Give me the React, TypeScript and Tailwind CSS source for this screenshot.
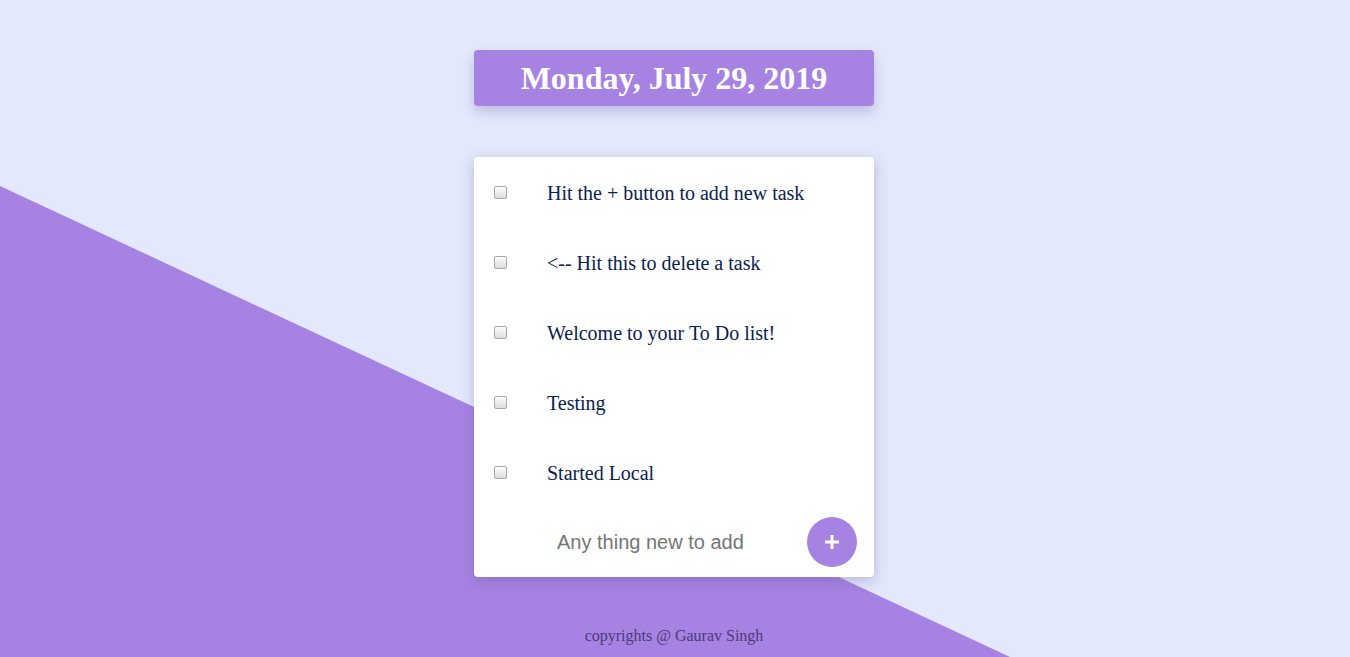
import { useState } from 'react';

const initialTasks = [
	'Hit the + button to add new task',
	'<-- Hit this to delete a task',
	'Welcome to your To Do list!',
	'Testing',
	'Started Local',
];

export default function App() {
	const [tasks, setTasks] = useState(initialTasks);
	const [draft, setDraft] = useState('');

	const addTask = () => {
		if (!draft.trim()) return;
		setTasks(list => [...list, draft.trim()]);
		setDraft('');
	};

	return (
		<div className="relative h-[657px] overflow-hidden bg-[#e3e8fc] font-['Liberation_Serif',serif]">
			{/* diagonal purple backdrop */}
			<div className="absolute inset-0 bg-[#a682e2] [clip-path:polygon(0_186px,1010px_657px,0_657px)]" />

			<div className="relative flex flex-col items-center pr-[2px] pt-[50px]">
				<div className="flex h-[56px] w-[400px] items-center justify-center rounded bg-[#a682e2] shadow-[0_6px_12px_rgba(120,110,180,0.35)]">
					<h1 className="text-[32px] font-bold leading-none text-white">Monday, July 29, 2019</h1>
				</div>

				<div className="mt-[51px] w-[400px] rounded bg-white shadow-[0_4px_14px_rgba(100,90,150,0.35)]">
					{tasks.map((task, i) => (
						<div key={i} className="flex h-[70px] items-center">
							<input
								type="checkbox"
								onChange={() => setTasks(list => list.filter((_, j) => j !== i))}
								className="ml-[20px] mt-[1px] h-[13px] w-[13px] appearance-none rounded-[2px] border border-[#a9a9a9] bg-gradient-to-b from-[#fcfcfc] to-[#dcdcdc]"
							/>
							<span className="ml-[40px] mt-[2px] text-[20px] text-[#0b2151]">{task}</span>
						</div>
					))}
					<div className="flex h-[70px] items-center">
						<input
							value={draft}
							onChange={e => setDraft(e.target.value)}
							onKeyDown={e => e.key === 'Enter' && addTask()}
							placeholder="Any thing new to add"
							className="ml-[83px] w-[230px] font-['Liberation_Sans',sans-serif] text-[20px] text-[#333] outline-none placeholder:text-[#757575]"
						/>
						<button
							onClick={addTask}
							className="ml-auto mr-[17px] flex h-[50px] w-[50px] items-center justify-center rounded-full bg-[#a682e2]"
						>
							<svg width="16" height="16" viewBox="0 0 16 16">
								<path d="M8 1v14M1 8h14" stroke="white" strokeWidth="3" />
							</svg>
						</button>
					</div>
				</div>

				<p className="mt-[47px] text-[16px] text-[#4b3b78]">copyrights @ Gaurav Singh</p>
			</div>
		</div>
	);
}
